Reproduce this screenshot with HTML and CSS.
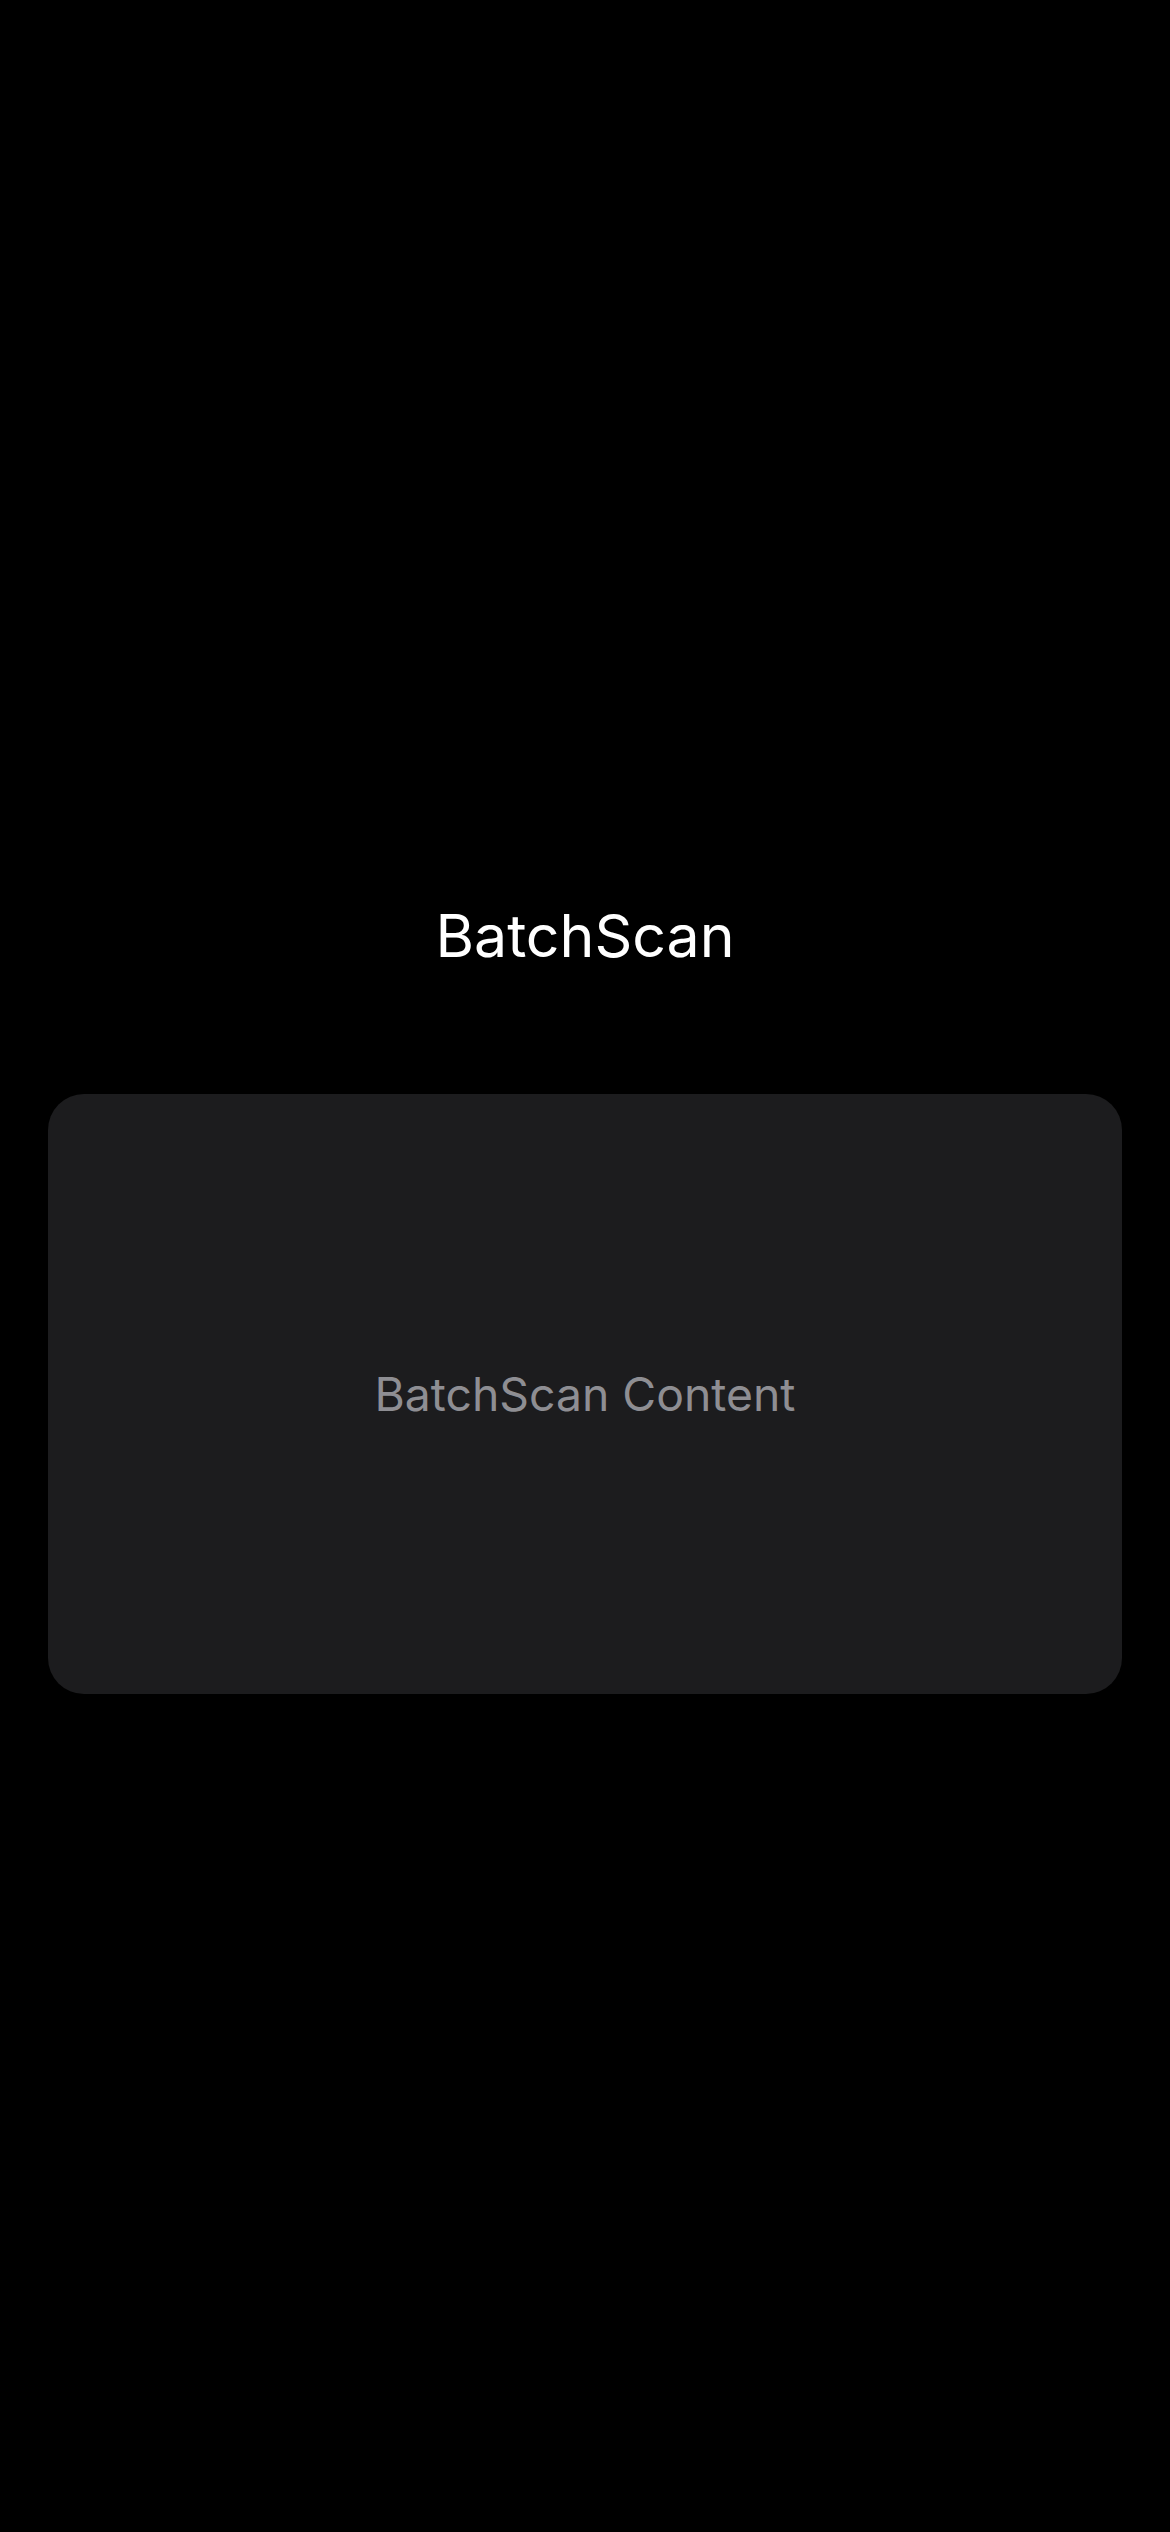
FILE: index.html
```html
<!DOCTYPE html>
<html>
<head>
<meta charset="utf-8">
<link rel="stylesheet" href="styles.css">
</head>
<body>
<main class="screen">
  <h1 class="title">BatchScan</h1>
  <section class="card">
    <p class="card-text">BatchScan Content</p>
  </section>
</main>
</body>
</html>
```

FILE: styles.css
```css
html, body {
  margin: 0;
  padding: 0;
  background: #000;
}
body {
  width: 1170px;
  height: 2532px;
  overflow: hidden;
  font-family: Inter, "Noto Sans", sans-serif;
}
.screen {
  display: flex;
  flex-direction: column;
  align-items: center;
  padding: 901px 48px 0;
}
.title {
  margin: 0;
  font-size: 59px;
  line-height: 70px;
  font-weight: 400;
  color: #fff;
}
.card {
  margin-top: 123px;
  align-self: stretch;
  height: 600px;
  background: #1c1c1e;
  border-radius: 36px;
  display: flex;
  align-items: center;
  justify-content: center;
}
.card-text {
  margin: 0;
  font-size: 46.3px;
  line-height: 54px;
  color: #8e8e93;
}
```
